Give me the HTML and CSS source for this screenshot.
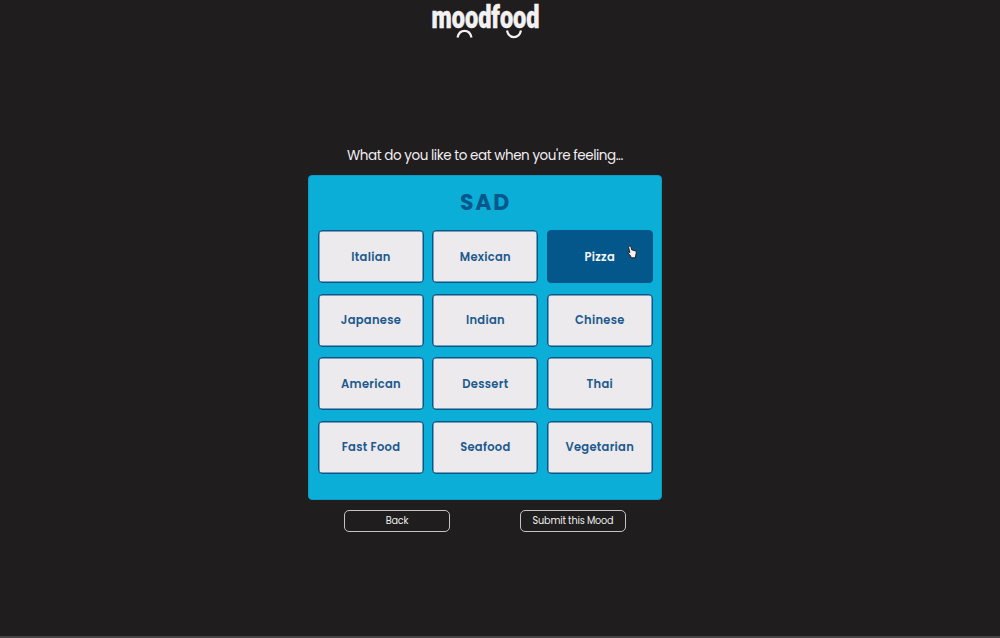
FILE: index.html
```html
<!DOCTYPE html>
<html lang="en">
<head>
<meta charset="utf-8">
<title>moodfood</title>
<link rel="stylesheet" href="styles.css">
</head>
<body>
<header class="header">
  <svg class="logo" width="112" height="42" viewBox="0 0 112 42">
    <text class="logo-text" x="1.5" y="28.3" textLength="108" lengthAdjust="spacingAndGlyphs">moodfood</text>
    <path class="logo-face" d="M27.5 37.5C29.5 28.8 39.5 28.8 41.5 37.5M77 30.5C79 39.2 89 39.2 91 30.5"/>
  </svg>
</header>
<main class="main">
  <h1 class="question">What do you like to eat when you're feeling...</h1>
  <section class="panel">
    <h2 class="mood">SAD</h2>
    <div class="grid">
      <button class="food">Italian</button>
      <button class="food">Mexican</button>
      <button class="food selected">Pizza
        <svg class="cursor" width="10" height="14" viewBox="0 0 10 14"><path d="M2 1.2Q3 .2 3.9 1.6L4.7 4.8 8.2 5.8Q9.5 6.2 9.3 8L8.6 10.5 8.4 12.8H4.2L3.6 11 .9 7.8Q.7 6.6 2 7L2.9 7.7 1.6 2.4Z"/></svg>
      </button>
      <button class="food">Japanese</button>
      <button class="food">Indian</button>
      <button class="food">Chinese</button>
      <button class="food">American</button>
      <button class="food">Dessert</button>
      <button class="food">Thai</button>
      <button class="food">Fast Food</button>
      <button class="food">Seafood</button>
      <button class="food">Vegetarian</button>
    </div>
  </section>
  <div class="actions">
    <button class="action">Back</button>
    <button class="action submit">Submit this Mood</button>
  </div>
</main>
</body>
</html>
```
FILE: styles.css
```css
* { box-sizing: border-box; }
body {
  margin: 0;
  height: 638px;
  overflow: hidden;
  background: #1f1d1e;
  border-bottom: 2px solid #454445;
  font-family: Poppins, Inter, sans-serif;
}
button { font-family: inherit; margin: 0; padding: 0; }
.header { height: 145px; padding-left: 430px; }
.logo { display: block; overflow: visible; }
.logo-text {
  font: 900 31.5px Roboto, sans-serif;
  fill: #f3f1f2;
  stroke: #f3f1f2;
  stroke-width: 0.5;
}
.logo-face { fill: none; stroke: #f3f1f2; stroke-width: 2.2; }
.main { width: 354px; margin-left: 308px; }
.question {
  margin: 0;
  height: 30px;
  line-height: 22px;
  font-size: 13.5px;
  font-weight: 400;
  letter-spacing: -0.45px;
  text-align: center;
  color: #f0eeef;
  white-space: nowrap;
}
.panel {
  height: 325px;
  padding: 0 8px 0 9px;
  border: 1px solid #0a9cc5;
  border-radius: 4px;
  background: #0aaed6;
}
.mood {
  margin: 0;
  height: 54px;
  padding-top: 11px;
  line-height: 32px;
  font-size: 22px;
  font-weight: 700;
  letter-spacing: 1.7px;
  text-align: center;
  color: #04578a;
}
.grid {
  display: grid;
  grid-template-columns: repeat(3, 106px);
  grid-auto-rows: 53px;
  column-gap: 8.4px;
  row-gap: 10.5px;
}
.food {
  position: relative;
  border: 1px solid #0b5589;
  border-radius: 4px;
  box-shadow: inset 0 0 0 0.5px #0b5589;
  background: #eceaed;
  color: #20598d;
  font-size: 11.5px;
  line-height: 17px;
  padding-top: 1px;
  font-weight: 600;
  letter-spacing: 0.3px;
}
.selected { background: #04578a; color: #f5f5f8; border-color: #04578a; }
.cursor { position: absolute; left: 79px; top: 14px; }
.cursor path { fill: #f3f3f3; stroke: #222; stroke-width: 1; }
.actions {
  display: flex;
  justify-content: space-between;
  padding: 10px 36px 0 36px;
}
.action {
  width: 106px;
  height: 22px;
  border: 1px solid #c5c3c4;
  border-radius: 5px;
  background: transparent;
  color: #f0eeef;
  font-size: 9.7px;
  line-height: 18px;
  letter-spacing: -0.19px;
}
```
